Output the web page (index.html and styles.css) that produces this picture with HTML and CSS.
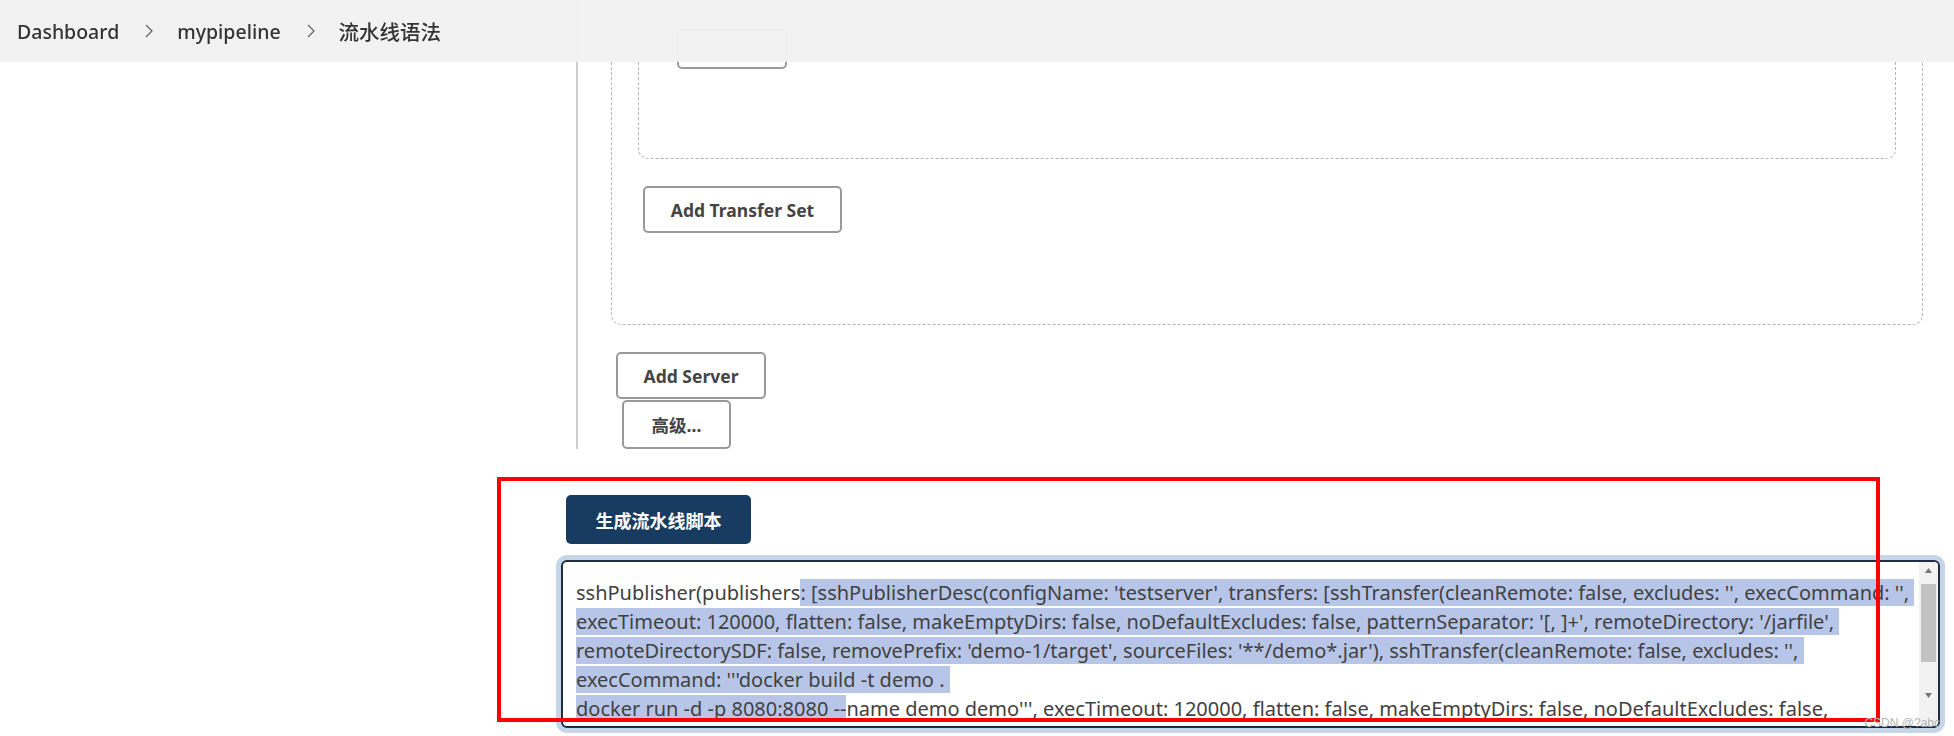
FILE: index.html
```html
<!DOCTYPE html>
<html lang="zh-CN">
<head>
    <meta charset="UTF-8">
    <meta name="viewport" content="width=device-width, initial-scale=1.0">
    <title>流水线语法</title>
    <link rel="stylesheet" href="styles.css">
</head>
<body>
    <div class="breadcrumbs">
        <a class="crumb" href="#">Dashboard</a>
        <svg class="chevron" viewBox="0 0 10 16" width="10" height="16"><path d="M2 2l6 6-6 6" fill="none" stroke="#666" stroke-width="1.3"/></svg>
        <a class="crumb" href="#">mypipeline</a>
        <svg class="chevron" viewBox="0 0 10 16" width="10" height="16"><path d="M2 2l6 6-6 6" fill="none" stroke="#666" stroke-width="1.3"/></svg>
        <span class="crumb crumb-cjk">流水线语法</span>
    </div>

    <div class="page">
        <div class="step">
            <div class="server-box">
                <div class="transfer-box">
                    <button class="btn btn-small"></button>
                </div>
                <button class="btn btn-transfer">Add Transfer Set</button>
            </div>
            <button class="btn btn-server">Add Server</button>
            <button class="btn btn-advanced">高级...</button>
        </div>

        <div class="generate">
            <button class="btn-primary">生成流水线脚本</button>
            <div class="script-box">
                <div class="script-text">
                    <div class="line">sshPublisher(publishers<span class="sel">: [sshPublisherDesc(configName: 'testserver', transfers: [sshTransfer(cleanRemote: false, excludes: '', execCommand: '', </span></div>
                    <div class="line"><span class="sel">execTimeout: 120000, flatten: false, makeEmptyDirs: false, noDefaultExcludes: false, patternSeparator: '[, ]+', remoteDirectory: '/jarfile', </span></div>
                    <div class="line"><span class="sel">remoteDirectorySDF: false, removePrefix: 'demo-1/target', sourceFiles: '**/demo*.jar'), sshTransfer(cleanRemote: false, excludes: '', </span></div>
                    <div class="line"><span class="sel">execCommand: '''docker build -t demo . </span></div>
                    <div class="line"><span class="sel">docker run -d -p 8080:8080 --</span>name demo demo''', execTimeout: 120000, flatten: false, makeEmptyDirs: false, noDefaultExcludes: false,</div>
                    <div class="line">patternSeparator: '[, ]+', remoteDirectory: '/jarfile', remoteDirectorySDF: false, removePrefix: 'demo-1/target', sourceFiles: ''</div>
                </div>
                <div class="scrollbar">
                    <svg class="arrow" viewBox="0 0 19 18" width="19" height="18"><path d="M6 11h7l-3.5-5z" fill="#777"/></svg>
                    <div class="track"><div class="thumb"></div></div>
                    <svg class="arrow" viewBox="0 0 19 18" width="19" height="18"><path d="M6 7h7l-3.5 5z" fill="#777"/></svg>
                    <div class="grip"></div>
                </div>
            </div>
        </div>
    </div>

    <div class="highlight-frame"></div>
    <div class="watermark">CSDN @?abc</div>
</body>
</html>
```

FILE: styles.css
```css
body {
    margin: 0;
    font-family: 'Noto Sans', 'Noto Sans CJK SC', sans-serif;
    background-color: #fff;
    color: #333;
    height: 736px;
    overflow: hidden;
}
.breadcrumbs {
    position: fixed;
    top: 0;
    left: 0;
    right: 0;
    height: 62px;
    display: flex;
    align-items: center;
    padding-left: 17px;
    background-color: rgba(242,242,242,0.97);
    z-index: 5;
}
.crumb {
    font-size: 19.5px;
    color: #333;
    text-decoration: none;
    font-weight: 500;
}
.crumb-cjk {
    font-size: 20.5px;
}
.chevron {
    margin: 0 23px 0 25px;
}
.page {
    padding-left: 576px;
}
.step {
    border-left: 2px solid #cfcfcf;
    padding-left: 33px;
    height: 449px;
    box-sizing: border-box;
}
.server-box {
    border: 1px dashed #b3b3b3;
    border-top: none;
    border-radius: 0 0 10px 10px;
    margin-right: 31px;
    padding: 0 26px 91px 26px;
}
.transfer-box {
    border: 1px dashed #b3b3b3;
    border-top: none;
    border-radius: 0 0 10px 10px;
    height: 159px;
    box-sizing: border-box;
    padding: 29px 0 0 38px;
}
.btn {
    display: block;
    background-color: #fff;
    border: 2px solid #999;
    border-radius: 5px;
    color: #444;
    font-family: 'Noto Sans', 'Noto Sans CJK SC', sans-serif;
    font-size: 17.5px;
    font-weight: 700;
    cursor: pointer;
    box-sizing: border-box;
}
.btn-small {
    width: 110px;
    height: 40px;
}
.btn-transfer {
    margin: 27px 0 0 5px;
    width: 199px;
    height: 47px;
}
.btn-server {
    margin: 27px 0 0 5px;
    width: 150px;
    height: 47px;
}
.btn-advanced {
    margin: 1px 0 0 11px;
    width: 109px;
    height: 49px;
}
.generate {
    margin-left: -10px;
    padding-top: 46px;
}
.btn-primary {
    display: block;
    width: 185px;
    height: 49px;
    border: none;
    border-radius: 5px;
    background-color: #183c61;
    color: #fff;
    font-family: 'Noto Sans', 'Noto Sans CJK SC', sans-serif;
    font-size: 18px;
    font-weight: 700;
}
.script-box {
    margin: 16px 0 0 -5px;
    width: 1379px;
    height: 168px;
    box-sizing: border-box;
    border: 2px solid #1f2d3d;
    border-radius: 6px;
    box-shadow: 0 0 0 5px #c6d6e8;
    display: flex;
    overflow: hidden;
    background-color: #fff;
}
.script-text {
    flex: 1;
    min-width: 0;
    padding: 16px 0 0 13px;
    overflow: hidden;
    font-size: 20px;
    line-height: 29px;
    color: #414141;
}
.line {
    white-space: pre;
    overflow: hidden;
}
.sel {
    background-color: #b7c6e8;
}
.scrollbar {
    width: 19px;
    flex-shrink: 0;
    display: flex;
    flex-direction: column;
    background-color: #f2f2f2;
}
.arrow {
    display: block;
}
.track {
    flex: 1;
    padding: 4px 2px;
}
.thumb {
    height: 78px;
    background-color: #c2c2c2;
}
.grip {
    height: 22px;
}
.highlight-frame {
    position: absolute;
    left: 497px;
    top: 477px;
    width: 1383px;
    height: 245px;
    box-sizing: border-box;
    border: 4px solid #ff0000;
    pointer-events: none;
}
.watermark {
    position: absolute;
    right: 14px;
    bottom: 6px;
    font-family: 'Liberation Sans', sans-serif;
    font-size: 12px;
    color: #b5b5b5;
}
```
